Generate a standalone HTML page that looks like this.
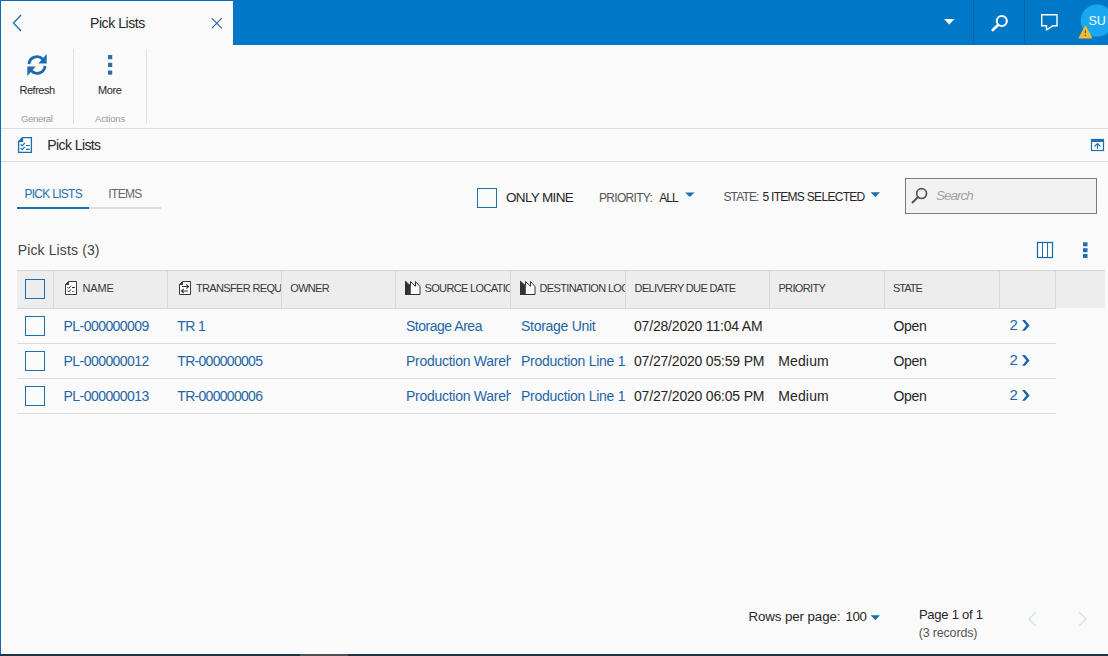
<!DOCTYPE html>
<html><head><meta charset="utf-8">
<style>
*{margin:0;padding:0;box-sizing:border-box}
html,body{width:1108px;height:656px;overflow:hidden;background:#fafafa;font-family:"Liberation Sans",sans-serif;color:#262626}
.a{position:absolute;white-space:nowrap;line-height:1}
.hl{position:absolute;background:#dcdcdc;height:1px}
.vl{position:absolute;background:#d8d8d8;width:1px}
.lnk{color:#1f65a6}
.cb{position:absolute;width:20px;height:20px;border:2px solid #1f6fb0;background:transparent}
svg{position:absolute;overflow:visible}
</style></head><body>
<!-- frame borders -->
<div style="position:absolute;left:0;top:0;width:1108px;height:1px;background:#0a6bb5"></div>
<div style="position:absolute;left:0;top:0;width:1px;height:656px;background:#0a6bb5"></div>

<!-- top blue bar -->
<div style="position:absolute;left:233px;top:0;width:875px;height:45px;background:#0078c8"></div>
<div style="position:absolute;left:973px;top:0;width:1px;height:45px;background:#0065ab"></div>
<div style="position:absolute;left:1024px;top:0;width:1px;height:45px;background:#0065ab"></div>

<!-- tab -->
<svg style="left:0;top:0" width="40" height="45"><path d="M21 15 L13.5 23 L21 31" fill="none" stroke="#1e6eb0" stroke-width="1.3"/></svg>
<div class="a" style="left:90px;top:15.9px;font-size:14px;color:#262626;letter-spacing:-0.44px">Pick Lists</div>
<svg style="left:0;top:0" width="240" height="45"><path d="M211.7 18.2 L221.8 28.3 M221.8 18.2 L211.7 28.3" fill="none" stroke="#2860a0" stroke-width="1.1"/></svg>

<!-- header icons -->
<svg style="left:0;top:0" width="1108" height="45">
  <path d="M944 19 L954.5 19 L949.25 24.5 Z" fill="#fff"/>
  <circle cx="1001.8" cy="21" r="5" fill="none" stroke="#fff" stroke-width="2.1"/>
  <path d="M997.8 25.2 L992.8 30" stroke="#fff" stroke-width="2.8" stroke-linecap="round"/>
  <path d="M1041.7 14.7 H1057 V25.8 H1053 L1046.5 29.8 V25.8 H1041.7 Z" fill="none" stroke="#fff" stroke-width="1.4" stroke-linejoin="miter"/>
  <circle cx="1097" cy="20.6" r="16.2" fill="#1aa7f2"/>
  <path d="M1085.4 26.6 L1091.4 37.8 L1079.4 37.8 Z" fill="#f2bb33" stroke="#f2bb33" stroke-width="1.5" stroke-linejoin="round"/>
  <path d="M1085.4 30.2 V33.6" stroke="#6b5a3a" stroke-width="1.2"/>
  <rect x="1084.8" y="34.8" width="1.2" height="1.2" fill="#6b5a3a"/>
</svg>
<div class="a" style="left:1088.5px;top:14.9px;font-size:12.5px;color:#fff">SU</div>

<!-- toolbar -->
<svg style="left:0;top:0" width="200" height="130">
  <path d="M29 64.2 A8 8 0 0 1 42.8 59.2" fill="none" stroke="#1f6aac" stroke-width="2.8"/>
  <path d="M46.7 54 L46.7 63.4 L38.3 63.4 Z" fill="#1f6aac"/>
  <path d="M45 65.8 A8 8 0 0 1 31.2 70.8" fill="none" stroke="#1f6aac" stroke-width="2.8"/>
  <path d="M27.3 76 L27.3 66.6 L35.7 66.6 Z" fill="#1f6aac"/>
  <rect x="108" y="55" width="4.2" height="4.2" fill="#2a6fb0"/>
  <rect x="108" y="62.8" width="4.2" height="4.2" fill="#2a6fb0"/>
  <rect x="108" y="70.5" width="4.2" height="4.2" fill="#2a6fb0"/>
</svg>
<div class="a" style="left:19.5px;top:85.2px;font-size:11px;color:#262626;letter-spacing:-0.48px">Refresh</div>
<div class="a" style="left:98px;top:85.2px;font-size:11px;color:#262626;letter-spacing:-0.4px">More</div>
<div class="a" style="left:21px;top:114px;font-size:9.5px;color:#999;letter-spacing:-0.33px">General</div>
<div class="a" style="left:95px;top:114px;font-size:9.5px;color:#999;letter-spacing:-0.17px">Actions</div>
<div class="vl" style="left:73px;top:49px;height:75px;background:#e0e0e0"></div>
<div class="vl" style="left:146px;top:49px;height:75px;background:#e0e0e0"></div>
<div class="hl" style="left:1px;top:128px;width:1107px;background:#dedede"></div>

<!-- section header -->
<svg style="left:0;top:0" width="60" height="160">
  <path d="M22.5 137.6 H31.4 V152.4 H18.6 V141.5 Z" fill="#fff" stroke="#1f6aac" stroke-width="1.3"/>
  <path d="M18 142.1 L23.1 137 V142.1 Z" fill="#1f6aac"/>
  <path d="M20.6 144.3 L22.1 145.8 L24.8 143 M20.6 148.2 L22.1 149.7 L24.8 146.9" fill="none" stroke="#1f6aac" stroke-width="1.2"/>
  <path d="M26 145.5 H29.8 M26 149.4 H29.8" stroke="#1f6aac" stroke-width="1.1"/>
</svg>
<div class="a" style="left:47.3px;top:137.9px;font-size:14px;color:#262626;letter-spacing:-0.59px">Pick Lists</div>
<svg style="left:0;top:0" width="1108" height="160">
  <rect x="1091.5" y="139.5" width="12" height="11" fill="#fff" stroke="#1f6fb0" stroke-width="1.2"/>
  <rect x="1091" y="139" width="13" height="3" fill="#1f6fb0"/>
  <path d="M1097.5 149 V143.5 M1094.5 146.5 L1097.5 143.5 L1100.5 146.5" fill="none" stroke="#1f6fb0" stroke-width="1.1"/>
</svg>
<div class="hl" style="left:1px;top:161px;width:1107px;background:#dedede"></div>

<!-- tabs -->
<div class="a" style="left:24.4px;top:187.6px;font-size:12px;color:#1f6fb0;letter-spacing:-0.71px">PICK LISTS</div>
<div class="a" style="left:108.3px;top:187.6px;font-size:12px;color:#666;letter-spacing:-0.65px">ITEMS</div>
<div style="position:absolute;left:17px;top:207px;width:144px;height:2px;background:#ddd"></div>
<div style="position:absolute;left:17px;top:207px;width:72px;height:2px;background:#1f6fb0"></div>

<!-- filters -->
<div class="cb" style="left:477px;top:188px;border-width:1.5px"></div>
<div class="a" style="left:506px;top:190.6px;font-size:13.5px;color:#262626;letter-spacing:-0.65px">ONLY MINE</div>
<div class="a" style="left:599px;top:191.9px;font-size:12px;color:#555;letter-spacing:-0.7px">PRIORITY:</div>
<div class="a" style="left:659.3px;top:191.9px;font-size:12px;color:#262626;letter-spacing:-1px">ALL</div>
<div class="a" style="left:723.4px;top:190.8px;font-size:12px;color:#555;letter-spacing:-0.85px">STATE:</div>
<div class="a" style="left:762.4px;top:190.8px;font-size:12px;color:#262626;letter-spacing:-0.7px">5 ITEMS SELECTED</div>
<svg style="left:0;top:0" width="1108" height="220">
  <path d="M685 192.6 H694.6 L689.8 197 Z" fill="#1f6fb0"/>
  <path d="M870.6 192.2 H880 L875.3 197 Z" fill="#1f6fb0"/>
</svg>
<div style="position:absolute;left:905px;top:178px;width:192px;height:36px;border:1px solid #7a7a7a;background:#f2f2f2"></div>
<svg style="left:0;top:0" width="1108" height="220">
  <circle cx="921.6" cy="193.6" r="4.9" fill="none" stroke="#555" stroke-width="1.7"/>
  <path d="M918 197 L912.5 202.5" stroke="#555" stroke-width="2" stroke-linecap="round"/>
</svg>
<div class="a" style="left:936px;top:189.4px;font-size:13.5px;color:#a3a3a3;font-style:italic;letter-spacing:-1.0px">Search</div>

<!-- grid title -->
<div class="a" style="left:17.7px;top:242.9px;font-size:14px;color:#444;letter-spacing:0.13px">Pick Lists (3)</div>
<svg style="left:0;top:0" width="1108" height="270">
  <rect x="1037.5" y="242.5" width="15" height="15" fill="#fff" stroke="#1565a8" stroke-width="1.2"/>
  <path d="M1042.5 242.5 V257.5 M1047.5 242.5 V257.5" stroke="#1f6fb0" stroke-width="1"/>
  <rect x="1083" y="242.3" width="4.5" height="4" fill="#1f6fb0"/>
  <rect x="1083" y="248.2" width="4.5" height="4" fill="#1f6fb0"/>
  <rect x="1083" y="254" width="4.5" height="4" fill="#1f6fb0"/>
</svg>

<!-- grid header -->
<div style="position:absolute;left:17px;top:270px;width:1088px;height:38px;background:#ededed"></div>
<div class="hl" style="left:17px;top:270px;width:1088px;background:#d6d6d6"></div>
<div class="hl" style="left:17px;top:308px;width:1039px;background:#d6d6d6"></div>
<div class="vl" style="left:53px;top:271px;height:37px"></div>
<div class="vl" style="left:167px;top:271px;height:37px"></div>
<div class="vl" style="left:281px;top:271px;height:37px"></div>
<div class="vl" style="left:395px;top:271px;height:37px"></div>
<div class="vl" style="left:510px;top:271px;height:37px"></div>
<div class="vl" style="left:625px;top:271px;height:37px"></div>
<div class="vl" style="left:769px;top:271px;height:37px"></div>
<div class="vl" style="left:884px;top:271px;height:37px"></div>
<div class="vl" style="left:999px;top:271px;height:37px"></div>
<div class="vl" style="left:1055px;top:271px;height:37px"></div>
<div class="cb" style="left:25px;top:279px;border-width:1.5px"></div>
<div class="a" style="left:82.6px;top:282.7px;font-size:11px;color:#383838;letter-spacing:-0.2px">NAME</div>
<div style="position:absolute;left:196px;top:270px;width:85px;height:38px;overflow:hidden"><div class="a" style="left:0;top:12.7px;font-size:11px;color:#383838;letter-spacing:-0.65px">TRANSFER REQUEST</div></div>
<div class="a" style="left:290.3px;top:282.7px;font-size:11px;color:#383838;letter-spacing:-0.7px">OWNER</div>
<div style="position:absolute;left:424.5px;top:270px;width:85.5px;height:38px;overflow:hidden"><div class="a" style="left:0;top:12.7px;font-size:11px;color:#383838;letter-spacing:-0.65px">SOURCE LOCATION</div></div>
<div style="position:absolute;left:539.5px;top:270px;width:85.5px;height:38px;overflow:hidden"><div class="a" style="left:0;top:12.7px;font-size:11px;color:#383838;letter-spacing:-0.65px">DESTINATION LOCATION</div></div>
<div class="a" style="left:634.6px;top:282.7px;font-size:11px;color:#383838;letter-spacing:-0.65px">DELIVERY DUE DATE</div>
<div class="a" style="left:778.4px;top:282.7px;font-size:11px;color:#383838;letter-spacing:-0.63px">PRIORITY</div>
<div class="a" style="left:893px;top:282.7px;font-size:11px;color:#383838;letter-spacing:-1.0px">STATE</div>
<svg style="left:0;top:0" width="1108" height="310">
  <path d="M68.5 281.5 H76.5 V294.5 H65.5 V284.5 Z" fill="#fff" stroke="#3a3a3a" stroke-width="1"/>
  <path d="M65 285 L69 281 V285 Z" fill="#3a3a3a"/>
  <path d="M67.3 287 L68.7 288.4 L71 285.8 M67.3 290.6 L68.7 292 L71 289.4" fill="none" stroke="#333" stroke-width="1"/>
  <path d="M72 287.5 H75" stroke="#333" stroke-width="1.1"/>
  <path d="M72 291.5 H75" stroke="#666" stroke-width="1" stroke-dasharray="1 0.5"/>
  <path d="M182.5 281.5 H190.5 V294.5 H179.5 V284.5 Z" fill="#fff" stroke="#3a3a3a" stroke-width="1"/>
  <path d="M179 285 L183 281 V285 Z" fill="#3a3a3a"/>
  <path d="M182 286.5 H188.5 M186.3 284.3 L188.5 286.5 L186.3 288.7" fill="none" stroke="#333" stroke-width="1.1"/>
  <path d="M188 291 H181.5 M183.7 288.8 L181.5 291 L183.7 293.2" fill="none" stroke="#333" stroke-width="1.1"/>
  <path d="M405.5 294.5 V281.3 L410.5 285.8 V281.5 L415.5 286.3 V281.5 L420 286.5 V294.5 Z" fill="#fff" stroke="#333" stroke-width="1"/>
  <path d="M405 295 V281 L410.8 286 V295 Z" fill="#333"/>
  <path d="M520.5 294.5 V281.3 L525.5 285.8 V281.5 L530.5 286.3 V281.5 L535 286.5 V294.5 Z" fill="#fff" stroke="#333" stroke-width="1"/>
  <path d="M520 295 V281 L525.8 286 V295 Z" fill="#333"/>
</svg>

<!-- rows -->
<div class="hl" style="left:17px;top:343px;width:1039px"></div>
<div class="hl" style="left:17px;top:378px;width:1039px"></div>
<div class="hl" style="left:17px;top:413px;width:1039px"></div>

<div class="cb" style="left:25px;top:316px;border-width:1.5px"></div>
<div class="cb" style="left:25px;top:351px;border-width:1.5px"></div>
<div class="cb" style="left:25px;top:386px;border-width:1.5px"></div>

<div class="a lnk" style="left:63.6px;top:319.1px;font-size:14px;letter-spacing:-0.56px">PL-000000009</div>
<div class="a lnk" style="left:177.3px;top:319.1px;font-size:14px;letter-spacing:-0.65px">TR 1</div>
<div class="a lnk" style="left:406px;top:319.1px;font-size:14px;letter-spacing:-0.48px">Storage Area</div>
<div class="a lnk" style="left:521px;top:319.1px;font-size:14px;letter-spacing:-0.28px">Storage Unit</div>
<div class="a" style="left:634px;top:319.1px;font-size:14px;color:#262626;letter-spacing:-0.19px">07/28/2020 11:04 AM</div>
<div class="a" style="left:893.5px;top:319.1px;font-size:14px;letter-spacing:-0.35px;color:#262626">Open</div>
<div class="a lnk" style="left:1009.6px;top:317.4px;font-size:15px">2</div>

<div class="a lnk" style="left:63.6px;top:354.1px;font-size:14px;letter-spacing:-0.56px">PL-000000012</div>
<div class="a lnk" style="left:177.3px;top:354.1px;font-size:14px;letter-spacing:-0.70px">TR-000000005</div>
<div style="position:absolute;left:406px;top:340px;width:105px;height:35px;overflow:hidden"><div class="a lnk" style="left:0;top:14.1px;font-size:14px;letter-spacing:-0.27px">Production Warehouse</div></div>
<div class="a lnk" style="left:521px;top:354.1px;font-size:14px;letter-spacing:-0.28px">Production Line 1</div>
<div class="a" style="left:634px;top:354.1px;font-size:14px;color:#262626;letter-spacing:-0.19px">07/27/2020 05:59 PM</div>
<div class="a" style="left:778.2px;top:354.1px;font-size:14px;color:#262626;letter-spacing:0.15px">Medium</div>
<div class="a" style="left:893.5px;top:354.1px;font-size:14px;letter-spacing:-0.35px;color:#262626">Open</div>
<div class="a lnk" style="left:1009.6px;top:352.4px;font-size:15px">2</div>

<div class="a lnk" style="left:63.6px;top:389.1px;font-size:14px;letter-spacing:-0.56px">PL-000000013</div>
<div class="a lnk" style="left:177.3px;top:389.1px;font-size:14px;letter-spacing:-0.70px">TR-000000006</div>
<div style="position:absolute;left:406px;top:375px;width:105px;height:35px;overflow:hidden"><div class="a lnk" style="left:0;top:14.1px;font-size:14px;letter-spacing:-0.27px">Production Warehouse</div></div>
<div class="a lnk" style="left:521px;top:389.1px;font-size:14px;letter-spacing:-0.28px">Production Line 1</div>
<div class="a" style="left:634px;top:389.1px;font-size:14px;color:#262626;letter-spacing:-0.19px">07/27/2020 06:05 PM</div>
<div class="a" style="left:778.2px;top:389.1px;font-size:14px;color:#262626;letter-spacing:0.15px">Medium</div>
<div class="a" style="left:893.5px;top:389.1px;font-size:14px;letter-spacing:-0.35px;color:#262626">Open</div>
<div class="a lnk" style="left:1009.6px;top:387.4px;font-size:15px">2</div>

<svg style="left:0;top:0" width="1108" height="420">
  <path d="M1022 320 H1025 L1029.6 325.4 L1025 330.8 H1022 L1026.4 325.4 Z" fill="#1a64a8"/>
  <path d="M1022 355 H1025 L1029.6 360.4 L1025 365.8 H1022 L1026.4 360.4 Z" fill="#1a64a8"/>
  <path d="M1022 390 H1025 L1029.6 395.4 L1025 400.8 H1022 L1026.4 395.4 Z" fill="#1a64a8"/>
</svg>

<!-- pagination -->
<div class="a" style="left:748.4px;top:609.9px;font-size:13.3px;color:#262626;letter-spacing:-0.08px">Rows per page:</div>
<div class="a" style="left:845.4px;top:609.9px;font-size:13.3px;color:#262626;letter-spacing:-0.3px">100</div>
<svg style="left:0;top:0" width="1108" height="656">
  <path d="M870.7 615.2 H880 L875.35 620.2 Z" fill="#1f6fb0"/>
  <path d="M1036 612 L1029 619 L1036 626 M1079 612 L1086 619 L1079 626" fill="none" stroke="#cfe3ec" stroke-width="1.3"/>
</svg>
<div class="a" style="left:918.9px;top:607.7px;font-size:13px;color:#262626;letter-spacing:-0.23px">Page 1 of 1</div>
<div class="a" style="left:918.7px;top:626.6px;font-size:12.5px;color:#555;letter-spacing:-0.17px">(3 records)</div>

<!-- bottom bar -->
<div style="position:absolute;left:0;top:654px;width:1108px;height:2px;background:#1e3545"></div>
<div style="position:absolute;left:300px;top:654px;width:48px;height:2px;background:#4f4f59"></div>
</body></html>
